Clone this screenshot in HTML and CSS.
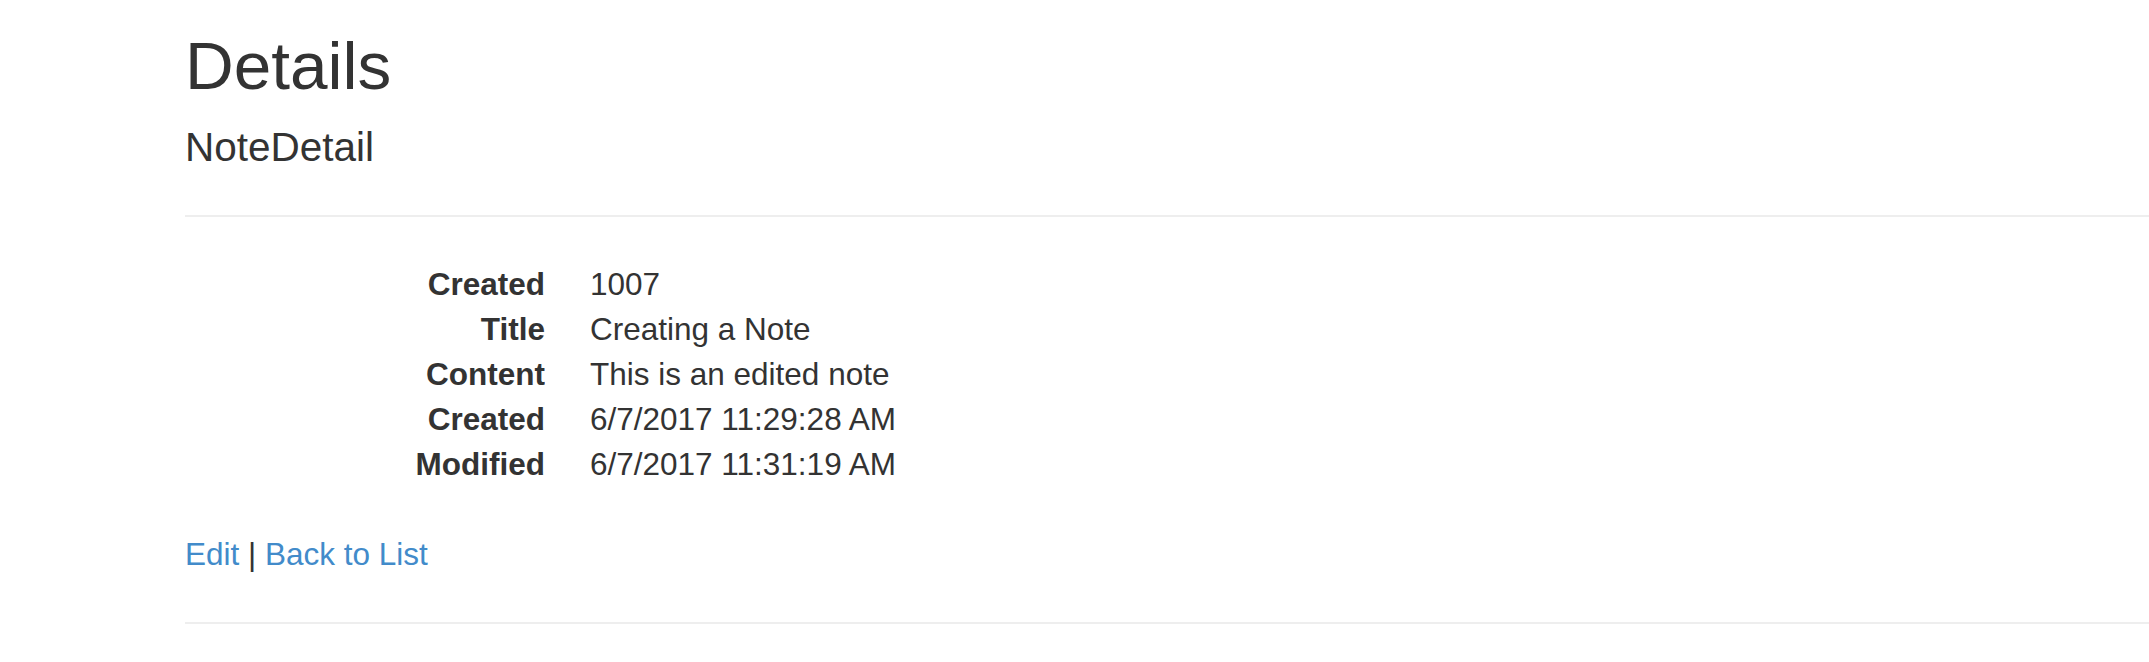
FILE: index.html
```html
<!DOCTYPE html>
<html lang="en">
<head>
<meta charset="utf-8">
<title>Details</title>
<link rel="stylesheet" href="styles.css">
</head>
<body>
<div class="body-content">
  <h2 class="page-title">Details</h2>
  <div class="detail">
    <h4 class="subtitle">NoteDetail</h4>
    <hr class="rule">
    <dl class="dl-horizontal">
      <dt>Created</dt><dd>1007</dd>
      <dt>Title</dt><dd>Creating a Note</dd>
      <dt>Content</dt><dd>This is an edited note</dd>
      <dt>Created</dt><dd>6/7/2017 11:29:28 AM</dd>
      <dt>Modified</dt><dd>6/7/2017 11:31:19 AM</dd>
    </dl>
  </div>
  <p class="actions"><a href="#">Edit</a> | <a href="#">Back to List</a></p>
  <hr class="rule">
</div>
</body>
</html>
```

FILE: styles.css
```css
html, body {
  margin: 0;
  padding: 0;
  background: #fff;
}
body {
  font-family: "Liberation Sans", Arial, sans-serif;
  font-size: 31.5px;
  line-height: 45px;
  color: #333;
  overflow: hidden;
}
.body-content {
  padding-left: 185px;
  margin-right: -40px;
}
.page-title {
  margin: 28.5px 0 22.5px;
  font-size: 67.5px;
  line-height: 1.1;
  font-weight: 500;
}
.subtitle {
  margin: 22.5px 0 22.5px;
  font-size: 40.5px;
  line-height: 1.1;
  font-weight: 500;
}
.rule {
  margin: 45px 0;
  border: 0;
  border-top: 2.25px solid #eee;
  height: 0;
}
.dl-horizontal {
  margin: 0 0 45px;
}
.dl-horizontal dt {
  float: left;
  clear: left;
  width: 360px;
  text-align: right;
  font-weight: bold;
  white-space: nowrap;
  overflow: hidden;
  text-overflow: ellipsis;
  line-height: 45px;
}
.dl-horizontal dd {
  margin-left: 405px;
  line-height: 45px;
}
.dl-horizontal::after {
  content: "";
  display: table;
  clear: both;
}
.actions {
  margin: 0 0 22.5px;
}
.actions a {
  color: #428bca;
  text-decoration: none;
}
```
